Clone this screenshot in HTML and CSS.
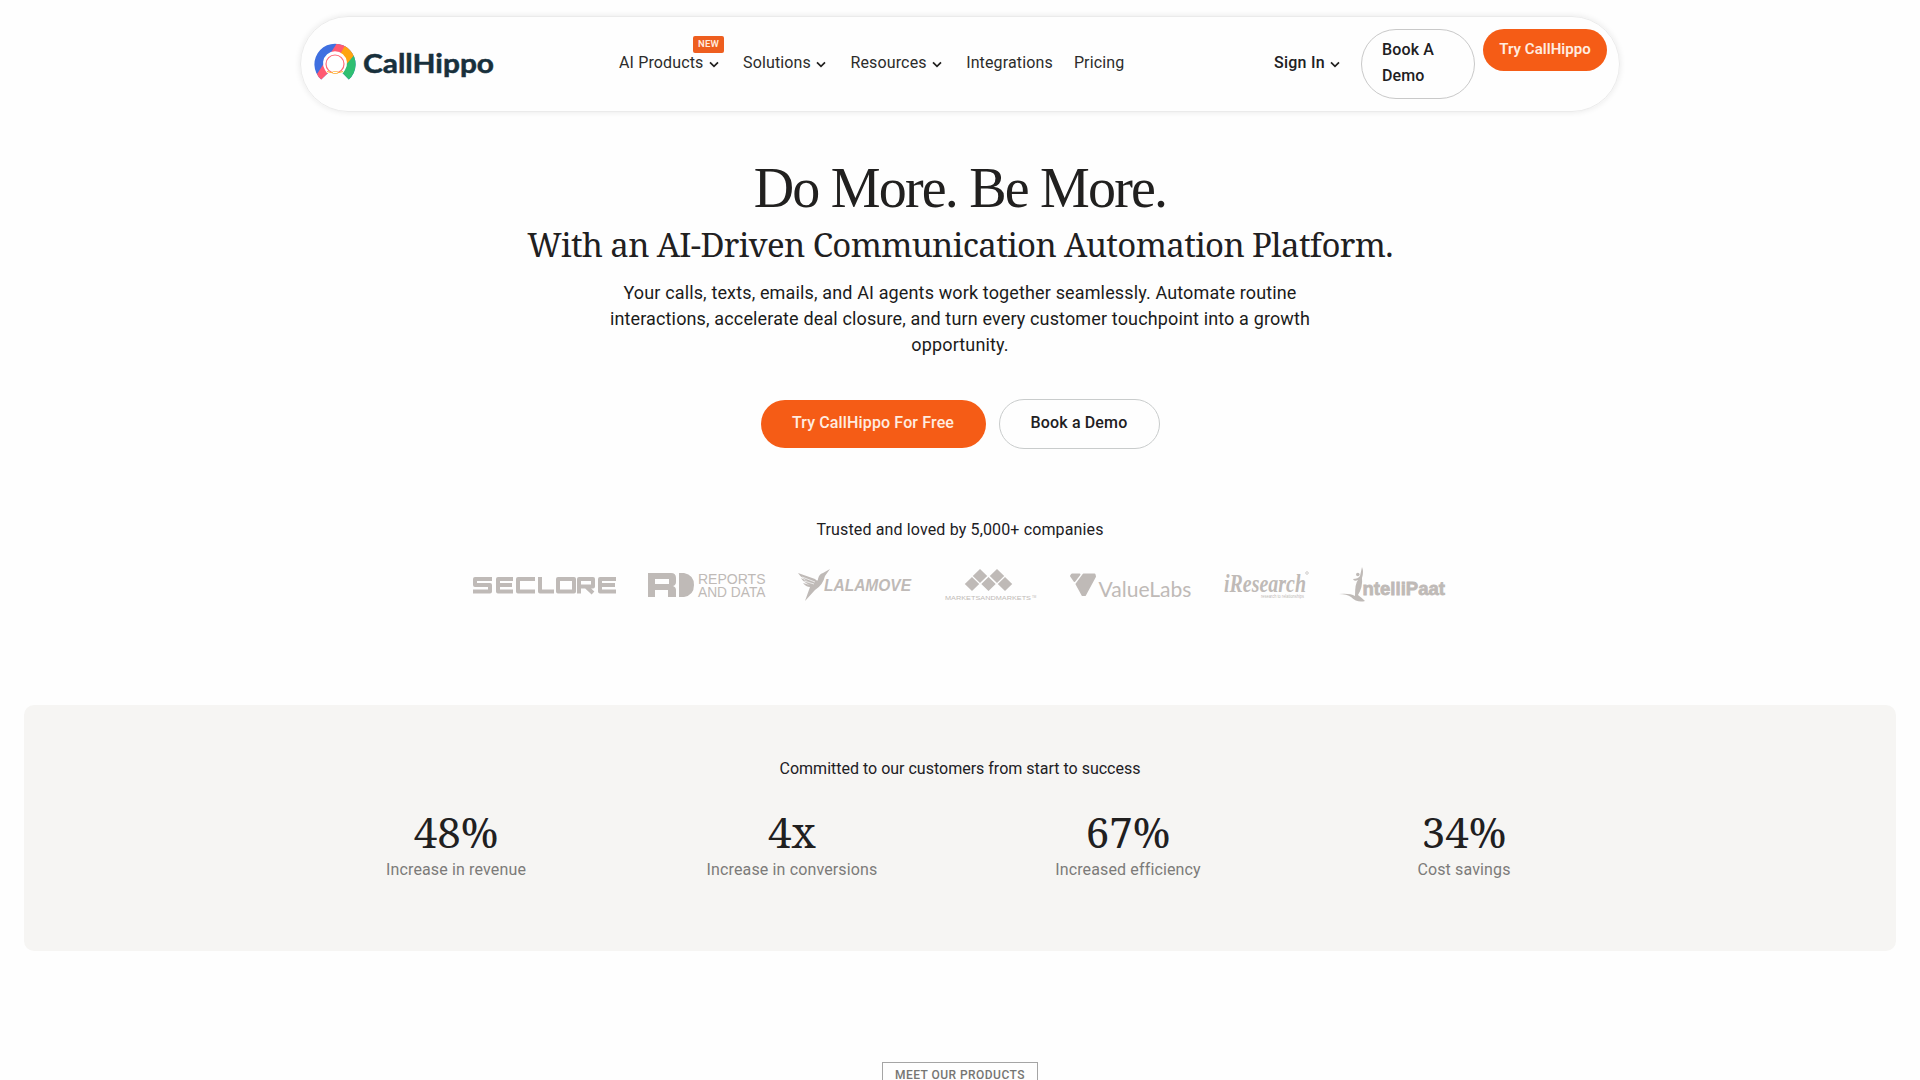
FILE: index.html
```
<!DOCTYPE html>
<html lang="en">
<head>
<meta charset="utf-8">
<title>CallHippo</title>
<link rel="stylesheet" href="styles.css">
</head>
<body>
<header class="navbar">
  <a class="brand" aria-label="CallHippo">
    <svg width="182" height="44" viewBox="0 0 182 44">
      <defs><clipPath id="disc"><path d="M7.200 37.600A20.600 20.600 0 1 1 34.800 37.600L28.500 31H14z"/></clipPath></defs>
      <g clip-path="url(#disc)">
        <rect width="42" height="44" fill="#3f6fe0"/>
        <path d="M25-2L-4 43H12L40-2z" fill="#ff5a72"/>
        <path d="M34-2L22 20L28 30L44 8z" fill="#ffa411"/>
        <path d="M42 11L25 31L36 42L44 30z" fill="#2fbf71"/>
        <path d="M11 28A12 12 0 1 1 31 28L29 31L13 31z" fill="#fff"/>
      </g>
      <circle cx="21" cy="22" r="9" fill="none" stroke="#ff6a78" stroke-width="1.200"/>
      <path d="M13 29.500Q21 32 29 29.500" fill="none" stroke="#ffb43d" stroke-width="1.200"/>
      <rect x="18.500" y="29.500" width="5.500" height="2" rx="1" fill="#fff" stroke="#ffa411" stroke-width=".6"/>
      <text x="49" y="30.500" textLength="131" lengthAdjust="spacingAndGlyphs" class="brand-name">CallHippo</text>
    </svg>
  </a>
  <nav class="menu">
    <a class="has-sub">AI Products<svg class="chev" viewBox="0 0 10 7"><path d="M1 1.300l4 4 4-4"/></svg><span class="new">NEW</span></a>
    <a class="has-sub">Solutions<svg class="chev" viewBox="0 0 10 7"><path d="M1 1.300l4 4 4-4"/></svg></a>
    <a class="has-sub">Resources<svg class="chev" viewBox="0 0 10 7"><path d="M1 1.300l4 4 4-4"/></svg></a>
    <a>Integrations</a>
    <a>Pricing</a>
  </nav>
  <div class="actions">
    <a class="signin">Sign In<svg class="chev" viewBox="0 0 10 7"><path d="M1 1.300l4 4 4-4"/></svg></a>
    <a class="btn-demo">Book A Demo</a>
    <a class="btn-try">Try CallHippo</a>
  </div>
</header>

<main>
  <section class="hero">
    <h1>Do More. Be More.</h1>
    <h2>With an AI-Driven Communication Automation Platform.</h2>
    <p class="lead">Your calls, texts, emails, and AI agents work together seamlessly. Automate routine interactions, accelerate deal closure, and turn every customer touchpoint into a growth opportunity.</p>
    <div class="cta">
      <a class="cta-main">Try CallHippo For Free</a>
      <a class="cta-alt">Book a Demo</a>
    </div>
    <p class="trusted">Trusted and loved by 5,000+ companies</p>
    <div class="logos">
      <svg width="144" height="40" viewBox="0 0 144 40" aria-label="Seclore">
        <g fill="none" stroke="#bfbab7" stroke-width="4" stroke-linejoin="round">
          <path d="M19 14H2V20H17V26.500H0M40 14H25V26.500H40M25 20H39M62 14H45V26.500H62M67 12V26.500H81M85 14H101V26.500H85zM106 28.500V14H120V21.500H106M113 21.500L120 28M143 14H127V26.500H143M127 20H142"/>
        </g>
      </svg>
      <svg width="119" height="40" viewBox="0 0 119 40" aria-label="Reports and Data">
        <path fill="#bfbab7" fill-rule="evenodd" d="M0 8H23Q28 8 28 13V17Q28 20 25 21Q28 22 28 25V32H20V25H7V32H0zM7 14V19H21V14zM31 8H36Q46 10 46 20T36 32H31z"/>
        <text x="50" y="18.500" textLength="67.500" lengthAdjust="spacingAndGlyphs" class="lg rd">REPORTS</text>
        <text x="50" y="32" textLength="67.500" lengthAdjust="spacingAndGlyphs" class="lg rd">AND DATA</text>
      </svg>
      <svg width="116" height="40" viewBox="0 0 116 40" aria-label="Lalamove">
        <path fill="#bfbab7" d="M0 8L17 14Q20 17 20 14Q21 9 25 8L32 4L27 11Q25 20 17 25L7 36L12 22Q8 22 5 18L12 20Q5 17 3 13L13 18Q3 13 0 8z"/>
        <path d="M4 12l13 5M6 16l10 3" stroke="#fefefe" stroke-width=".7"/>
        <text x="26" y="26" textLength="87" lengthAdjust="spacingAndGlyphs" class="lg lala">LALAMOVE</text>
      </svg>
      <svg width="94" height="40" viewBox="0 0 94 40" aria-label="MarketsandMarkets">
        <path fill="#bfbab7" d="M35 4l7.200 7-7.200 7-7.200-7zM52 4l7.200 7-7.200 7-7.200-7zM27 12l7.200 7-7.200 7-7.200-7zM43.500 12l7.200 7-7.200 7-7.200-7zM60 12l7.200 7-7.200 7-7.200-7z"/>
        <text x="0" y="35" textLength="86" lengthAdjust="spacingAndGlyphs" class="lg mm">MARKETSANDMARKETS</text>
        <text x="87" y="33" class="lg tm">TM</text>
      </svg>
      <svg width="123" height="40" viewBox="0 0 123 40" aria-label="ValueLabs">
        <path fill="#bfbab7" stroke="#bfbab7" stroke-width="2" stroke-linejoin="round" d="M2 9.500H9.500L4.500 16 1 11zM13.500 9.500H24.500L25 11.500 15 30H12.500L6.500 19z"/>
        <text x="28.500" y="31.500" textLength="93" lengthAdjust="spacingAndGlyphs" class="lg vl">ValueLabs</text>
      </svg>
      <svg width="86" height="40" viewBox="0 0 86 40" aria-label="iResearch">
        <text x="0" y="26.500" textLength="82" lengthAdjust="spacingAndGlyphs" class="lg ir">iResearch</text>
        <circle cx="83" cy="8" r="1.300" fill="none" stroke="#bfbab7" stroke-width=".7"/>
        <text x="37" y="32.500" textLength="43" lengthAdjust="spacingAndGlyphs" class="lg ir-sub">research to relationships</text>
      </svg>
      <svg width="106" height="40" viewBox="0 0 106 40" aria-label="IntelliPaat">
        <path fill="#bfbab7" d="M-2 29Q9 28 14 31Q14 18 17 15Q13 17 12 14Q17 14 19 11L21 2Q23 7 21 13Q22 22 17 30Q21 33 24 36Q16 38 10 32Q6 29-2 29z"/>
        <circle cx="16.800" cy="9.500" r="1.800" fill="#bfbab7"/>
        <text x="21.500" y="29.500" textLength="82.500" lengthAdjust="spacingAndGlyphs" class="lg ip">ntelliPaat</text>
      </svg>
    </div>
  </section>

  <section class="stats">
    <p class="stats-title">Committed to our customers from start to success</p>
    <div class="stats-grid">
      <div class="stat"><strong>48%</strong><span>Increase in revenue</span></div>
      <div class="stat"><strong>4x</strong><span>Increase in conversions</span></div>
      <div class="stat"><strong>67%</strong><span>Increased efficiency</span></div>
      <div class="stat"><strong>34%</strong><span>Cost savings</span></div>
    </div>
  </section>

  <section class="products"><span class="tag">MEET OUR PRODUCTS</span></section>
</main>
</body>
</html>
```
FILE: styles.css
```
* { box-sizing: border-box; }
html, body { height: 100%; }
body {
  margin: 0;
  padding-top: 16px;
  overflow: hidden;
  background: #fefefe;
  color: #21201f;
  font: 16px/26px Roboto, "Liberation Sans", sans-serif;
  letter-spacing: .14px;
}
h1, h2, p { margin: 0; }

.navbar {
  width: 1320px;
  height: 96px;
  margin: 0 auto;
  padding: 12px 11px 0 13px;
  display: flex;
  align-items: flex-start;
  border: 1px solid #ebebeb;
  border-radius: 48px;
  box-shadow: 0 0 6px rgba(0, 0, 0, .09);
}
.brand { width: 305px; padding-top: 13px; }
.brand svg { display: block; }
.brand-name { font: 700 27px Lato, sans-serif; letter-spacing: 0; fill: #18303c; stroke: #18303c; stroke-width: .5px; }
.menu { display: flex; gap: 21px; width: 655px; padding-top: 21px; color: #2c2c2b; }
.has-sub { position: relative; }
.chev { width: 10px; height: 7px; margin-left: 5.5px; fill: none; stroke: #21201f; stroke-width: 1.7; vertical-align: 0; }
.has-sub .chev { margin-right: 3px; }
.new {
  position: absolute;
  left: 74px;
  top: -14px;
  width: 31px;
  height: 17px;
  border-radius: 2px;
  background: #ee5e1f;
  color: #ffe9dd;
  font-size: 9.5px;
  font-weight: 600;
  line-height: 16px;
  letter-spacing: .2px;
  text-align: center;
}
.actions { display: flex; align-items: flex-start; }
.signin { width: 87px; padding-top: 21px; font-weight: 500; letter-spacing: .25px; }
.btn-demo {
  width: 114px;
  height: 70px;
  padding: 7px 30px 0 20px;
  border: 1px solid #c9c9c9;
  border-radius: 35px;
  font-weight: 500;
}
.btn-try {
  width: 124px;
  height: 42px;
  margin-left: 8px;
  border-radius: 21px;
  background: #f55c16;
  color: #ffece0;
  font-size: 15px;
  font-weight: 600;
  line-height: 41px;
  letter-spacing: .05px;
  text-align: center;
}

.hero { display: flex; flex-direction: column; align-items: center; text-align: center; }
h1 {
  margin-top: 42px;
  font: 400 56px/68px "Liberation Serif", serif;
  letter-spacing: -1.8px;
}
h2 {
  margin-top: 1px;
  font: 400 33px/44px "Noto Serif", "Liberation Serif", serif;
  letter-spacing: -.64px;
  white-space: nowrap;
}
.lead { width: 720px; margin-top: 13px; font-size: 18px; color: #1b1b1a; }
.cta { display: flex; align-items: center; gap: 13px; margin-top: 41px; font-weight: 500; }
.cta a { text-align: center; }
.cta-main { width: 225px; height: 48px; border-radius: 24px; background: #f55c16; color: #ffece0; line-height: 45px; }
.cta-alt { width: 161px; height: 50px; border: 1px solid #c9cccc; border-radius: 25px; line-height: 45px; }
.trusted { margin-top: 68px; }
.logos { display: flex; gap: 31px; width: 975px; margin-top: 22px; }
.logos svg { flex: none; overflow: visible; }
.lg { fill: #bfbab7; letter-spacing: 0; }
.rd { font: 15px "Liberation Sans", sans-serif; }
.lala { font: italic 700 16.5px "Liberation Sans", sans-serif; }
.mm { font: 5.5px "Liberation Sans", sans-serif; }
.tm { font: 3px "Liberation Sans", sans-serif; }
.vl { font: 21.5px Lato, sans-serif; }
.ir { font: italic 700 25px "Liberation Serif", serif; }
.ir-sub { font: 4.5px "Liberation Sans", sans-serif; }
.ip { font: 700 19px "Liberation Sans", sans-serif; stroke: #bfbab7; stroke-width: .8px; }

.stats {
  height: 246px;
  margin: 100px 24px 0;
  padding-top: 51px;
  border-radius: 10px;
  background: #f6f5f3;
  text-align: center;
}
.stats-title { letter-spacing: 0; }
.stats-grid { display: grid; grid-template-columns: repeat(4, 336px); justify-content: center; margin-top: 20px; }
.stat { display: flex; flex-direction: column; }
.stat strong { font: 400 42px/60px "Noto Serif", "Liberation Serif", serif; letter-spacing: 0; }
.stat span { margin-top: -5px; color: #7c7b79; }

.products { margin-top: 110px; text-align: center; }
.tag {
  display: inline-block;
  width: 156px;
  border: 1px solid #a5a5a5;
  color: #767674;
  font-size: 12px;
  font-weight: 500;
  line-height: 24px;
  letter-spacing: .45px;
}
```
